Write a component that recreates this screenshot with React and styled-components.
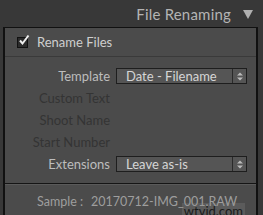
import React from 'react';
import styled, { createGlobalStyle } from 'styled-components';

const GlobalStyle = createGlobalStyle`
  html, body {
    margin: 0;
    padding: 0;
    background: #383838;
  }
  body {
    font-family: Lato, "Open Sans", sans-serif;
  }
`;

const Page = styled.div`
  width: 263px;
  height: 215px;
  position: relative;
  overflow: hidden;
  background: #383838;
`;

const Header = styled.div`
  height: 27px;
  display: flex;
  align-items: center;
  justify-content: flex-end;
  padding-right: 10px;
  gap: 12px;
  color: #b4b4b4;
  font-size: 15px;
  letter-spacing: 0.2px;
`;

const Triangle = styled.span`
  width: 0;
  height: 0;
  border-left: 5px solid transparent;
  border-right: 5px solid transparent;
  border-top: 9px solid #b0b0b0;
  margin-top: 2px;
`;

const Panel = styled.div`
  margin-left: 3px;
  width: 251px;
  border: 1px solid #111;
  border-width: 1px 2px 0 2px;
  background: #4b4b4b;
`;

const CheckRow = styled.div`
  height: 28px;
  display: flex;
  align-items: center;
  padding-left: 12px;
  gap: 9px;
  color: #cfcfcf;
  font-size: 13px;
  border-bottom: 1px solid #3a3a3a;
`;

const Box = styled.span`
  width: 9px;
  height: 9px;
  border: 1px solid #111;
  background: #2b2b2b;
  position: relative;
  svg {
    position: absolute;
    left: 0px;
    top: -4px;
  }
`;

const Body = styled.div`
  padding: 8px 0 8px;
  display: flex;
  flex-direction: column;
`;

const Row = styled.div`
  height: 22px;
  display: flex;
  align-items: center;
`;

const Label = styled.div`
  width: 105px;
  text-align: right;
  font-size: 13px;
  color: ${p => (p.$dim ? '#343434' : '#bdbdbd')};
  padding-right: 6px;
`;

const Select = styled.div`
  width: 129px;
  height: 14px;
  border: 1px solid #1e1e1e;
  background: #555;
  display: flex;
  align-items: center;
  font-size: 13px;
  color: #d6d6d6;
`;

const SelectText = styled.span`
  flex: 1;
  padding-left: 9px;
`;

const Arrows = styled.span`
  width: 13px;
  height: 14px;
  border-left: 1px solid #2a2a2a;
  display: flex;
  align-items: center;
  justify-content: center;
`;

const Divider = styled.div`
  height: 1px;
  background: #151515;
  border-bottom: 1px solid #5a5a5a;
`;

const Sample = styled.div`
  height: 32px;
  display: flex;
  align-items: center;
  padding-left: 32px;
  gap: 8px;
  font-size: 12.5px;
  color: #9e9e9e;
`;

const Watermark = styled.div`
  position: absolute;
  right: 18px;
  bottom: -4px;
  padding: 0 2px;
  font-size: 13px;
  color: #1a1a1a;
  background: rgba(140, 140, 140, 0.25);
`;

function Check() {
  return (
    <Box>
      <svg width="12" height="12" viewBox="0 0 12 12">
        <path d="M2 6.5 L4.5 9.5 L10.5 1.5" stroke="#eee" strokeWidth="2" fill="none" />
      </svg>
    </Box>
  );
}

function Stepper() {
  return (
    <Arrows>
      <svg width="6" height="9" viewBox="0 0 6 9">
        <path d="M0 3.5 L3 0.5 L6 3.5 Z M0 5.5 L3 8.5 L6 5.5 Z" fill="#bbb" />
      </svg>
    </Arrows>
  );
}

function Field({ label, value, dim }) {
  return (
    <Row>
      <Label $dim={dim}>{label}</Label>
      {value && (
        <Select>
          <SelectText>{value}</SelectText>
          <Stepper />
        </Select>
      )}
    </Row>
  );
}

export default function App() {
  return (
    <Page>
      <GlobalStyle />
      <Header>
        <span>File Renaming</span>
        <Triangle />
      </Header>
      <Panel>
        <CheckRow>
          <Check />
          <span>Rename Files</span>
        </CheckRow>
        <Body>
          <Field label="Template" value="Date - Filename" />
          <Field label="Custom Text" dim />
          <Field label="Shoot Name" dim />
          <Field label="Start Number" dim />
          <Field label="Extensions" value="Leave as-is" />
        </Body>
        <Divider />
        <Sample>
          <span>Sample :</span>
          <span>20170712-IMG_001.RAW</span>
        </Sample>
      </Panel>
      <Watermark>wtvid.com</Watermark>
    </Page>
  );
}
